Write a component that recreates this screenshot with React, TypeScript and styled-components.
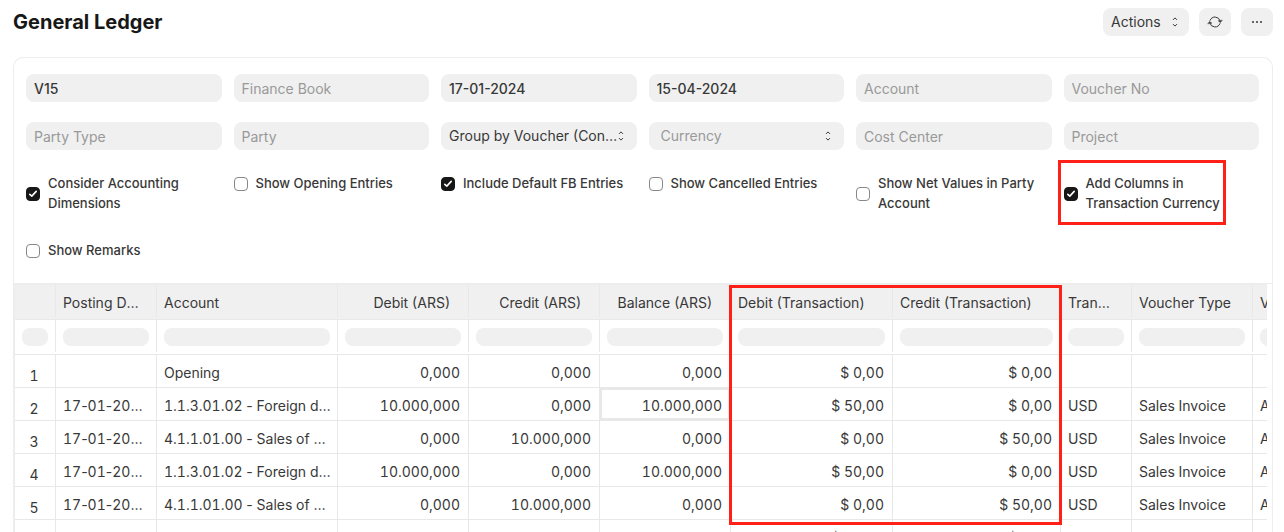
import React from "react";
import styled, { createGlobalStyle, css } from "styled-components";

const GlobalStyle = createGlobalStyle`
  *, *::before, *::after { box-sizing: border-box; }
  body {
    margin: 0;
    background: #ffffff;
    color: #383838;
    font-family: Inter, "Noto Sans", sans-serif;
    font-size: 14px;
    line-height: 20px;
    -webkit-font-smoothing: antialiased;
  }
`;

const Page = styled.div`
  display: flex;
  flex-direction: column;
  height: 100vh;
  overflow: hidden;
  padding: 8px 11px 0 13px;
`;

const PageHead = styled.header`
  display: flex;
  align-items: center;
  justify-content: space-between;
  height: 28px;
  margin-bottom: 21px;
`;

const Title = styled.h1`
  margin: 0;
  color: #171717;
  font-size: 20px;
  font-weight: 700;
  line-height: 28px;
`;

const HeadActions = styled.div`
  display: flex;
  gap: 10px;
`;

const HeadButton = styled.button<{ $wide?: boolean }>`
  display: flex;
  align-items: center;
  justify-content: ${(p) => (p.$wide ? "space-between" : "center")};
  width: ${(p) => (p.$wide ? "86px" : "32px")};
  height: 28px;
  padding: ${(p) => (p.$wide ? "0 10px 0 8px" : "0")};
  border: 0;
  border-radius: 8px;
  background: #f0f0f0;
  color: #383838;
  font: inherit;
`;

const Card = styled.main`
  flex: 1;
  min-height: 0;
  overflow: hidden;
  border: 1px solid #ededed;
  border-bottom: 0;
  border-radius: 10px 10px 0 0;
`;

const Filters = styled.form`
  display: grid;
  grid-template-columns: repeat(6, minmax(0, 1fr));
  gap: 20px 12px;
  padding: 16px 13px 19px 12px;
`;

const fieldBox = css`
  width: 100%;
  height: 28px;
  border: 0;
  border-radius: 8px;
  background: #f0f0f0;
  color: #383838;
  font: inherit;
  outline: none;
`;

const Field = styled.input`
  ${fieldBox}
  padding: 1px 8px 0;
  font-weight: 500;
  &::placeholder {
    color: #999999;
    font-weight: 400;
    opacity: 1;
  }
`;

const SelectWrap = styled.div`
  position: relative;
`;

const Select = styled.select<{ $empty?: boolean }>`
  ${fieldBox}
  appearance: none;
  padding: 0 12px 0 ${(p) => (p.$empty ? "12px" : "8px")};
  color: ${(p) => (p.$empty ? "#999999" : "#383838")};
  text-overflow: ellipsis;
`;

const SelectMark = styled.span`
  position: absolute;
  top: 0;
  right: 12px;
  display: flex;
  align-items: center;
  height: 28px;
  pointer-events: none;
`;

const Check = styled.label`
  position: relative;
  display: flex;
  align-items: center;
  align-self: start;
  gap: 8px;
  padding: 3px 0 2px;
  font-size: 13px;
  font-weight: 500;
`;

const CheckText = styled.span`
  padding-bottom: 2px;
`;

const Tick = styled.input`
  appearance: none;
  flex: none;
  width: 14px;
  height: 14px;
  margin: 0;
  border: 1px solid #888888;
  border-radius: 4px;
  background: #ffffff;
  &:checked {
    border-color: #171717;
    background: #171717 url("data:image/svg+xml,%3Csvg xmlns='http://www.w3.org/2000/svg' viewBox='0 0 12 12' fill='none' stroke='white' stroke-width='1.6' stroke-linecap='round' stroke-linejoin='round'%3E%3Cpath d='M2.8 6.3L4.8 8.1L9.2 3.4'/%3E%3C/svg%3E") center / 12px 12px no-repeat;
  }
`;

const Highlight = styled.span<{ $area: "check" | "columns" }>`
  position: absolute;
  pointer-events: none;
  border: 3px solid #ff2018;
  ${(p) =>
    p.$area === "check"
      ? css`
          top: -10px;
          left: -6px;
          width: 168px;
          height: 65px;
        `
      : css`
          top: 1px;
          left: 715px;
          width: 333px;
          height: 240px;
        `}
`;

const GridScroll = styled.div`
  position: relative;
  border-top: 1px solid #ededed;
`;

const GridClip = styled.div`
  overflow: hidden;
  margin-right: 5px;
`;

const Grid = styled.table`
  table-layout: fixed;
  width: 1360px;
  border-collapse: separate;
  border-spacing: 0;
  border-top: 1px solid #ededed;
  border-left: 1px solid #ededed;
`;

const HeadCell = styled.th<{ $filter?: boolean }>`
  height: 35px;
  padding: 0;
  border-bottom: 1px solid #e8e8e8;
  background: ${(p) => (p.$filter ? "#ffffff" : "#f0f0f0")};
  font-weight: 400;
  vertical-align: top;
`;

const HeadInner = styled.div<{ $right?: boolean }>`
  height: 32px;
  padding: 8px ${(p) => (p.$right ? "18px" : "15px")} 0 7px;
  border-right: 1px solid #e8e8e8;
  overflow: hidden;
  text-align: ${(p) => (p.$right ? "right" : "left")};
  text-overflow: ellipsis;
  white-space: nowrap;
`;

const FilterInner = styled.div`
  height: 32px;
  padding: 8px 7px 0;
  border-right: 1px solid #e8e8e8;
`;

const FilterInput = styled.input`
  display: block;
  width: 100%;
  height: 18px;
  padding: 0 8px;
  border: 0;
  border-radius: 8px;
  background: #f0f0f0;
  font: inherit;
`;

type CellKind = "index" | "date" | "text" | "number";

const cellPadding: Record<CellKind, string> = {
  index: "10px 2px 0 0",
  date: "3px 8px 0 7px",
  text: "3px 5px 0 7px",
  number: "3px 8px 0 7px",
};

const cellAlign: Record<CellKind, string> = {
  index: "center",
  date: "left",
  text: "left",
  number: "right",
};

const Cell = styled.td<{ $kind: CellKind; $active?: boolean }>`
  height: 33px;
  padding: ${(p) => cellPadding[p.$kind]};
  border-right: 1px solid #e8e8e8;
  border-bottom: 1px solid #e8e8e8;
  overflow: hidden;
  font-variant-numeric: tabular-nums;
  text-align: ${(p) => cellAlign[p.$kind]};
  text-overflow: ellipsis;
  white-space: nowrap;
  box-shadow: ${(p) => (p.$active ? "inset 0 0 0 2px #e8e8e8" : "none")};
`;

const Hyphen = styled.span`
  font-variant-numeric: proportional-nums;
`;

/* Digits line up in columns, while hyphens keep their ordinary narrow width. */
const CellText = ({ value }: { value: string }) => (
  <>
    {value.split("-").map((part, i) => (
      <React.Fragment key={i}>
        {i > 0 && <Hyphen>-</Hyphen>}
        {part}
      </React.Fragment>
    ))}
  </>
);

const SortMark = () => (
  <svg width="8" height="12" viewBox="0 0 8 12" fill="none" stroke="#383838" strokeLinecap="round" strokeLinejoin="round" aria-hidden="true">
    <path d="M2.3 3.6L4 1.9L5.7 3.6M2.3 8.4L4 10.1L5.7 8.4" />
  </svg>
);

const RefreshMark = () => (
  <svg width="16" height="16" viewBox="0 0 16 16" fill="none" stroke="#383838" strokeLinecap="round" strokeLinejoin="round" aria-hidden="true">
    <path d="M3 6.4A5.4 5.4 0 0 1 13.2 7M13 9.6A5.4 5.4 0 0 1 2.8 9" />
    <path d="M11.4 7L13.4 8.5L15.1 6.4Z M4.6 9L2.6 7.5L0.9 9.6Z" fill="#383838" strokeWidth="0.5" />
  </svg>
);

const DotsMark = () => (
  <svg width="16" height="16" viewBox="0 0 16 16" fill="#383838" aria-hidden="true">
    <circle cx="4" cy="8" r="1" />
    <circle cx="8" cy="8" r="1" />
    <circle cx="12" cy="8" r="1" />
  </svg>
);

type Column = { label: string; width: number; kind: CellKind; right?: boolean };

const columns: Column[] = [
  { label: "", width: 41, kind: "index" },
  { label: "Posting Date", width: 101, kind: "date" },
  { label: "Account", width: 181, kind: "text" },
  { label: "Debit (ARS)", width: 131, kind: "number", right: true },
  { label: "Credit (ARS)", width: 131, kind: "number", right: true },
  { label: "Balance (ARS)", width: 131, kind: "number", right: true },
  { label: "Debit (Transaction)", width: 162, kind: "number" },
  { label: "Credit (Transaction)", width: 168, kind: "number" },
  { label: "Transaction", width: 71, kind: "text" },
  { label: "Voucher Type", width: 121, kind: "text" },
  { label: "Voucher No", width: 121, kind: "text" },
];

const receivable = ["17-01-2024", "1.1.3.01.02 - Foreign debtors", "10.000,000", "0,000", "10.000,000", "$ 50,00", "$ 0,00", "USD", "Sales Invoice", "ACC-SINV"];
const income = ["17-01-2024", "4.1.1.01.00 - Sales of merchandise", "0,000", "10.000,000", "0,000", "$ 0,00", "$ 50,00", "USD", "Sales Invoice", "ACC-SINV"];

const rows: string[][] = [
  ["", "Opening", "0,000", "0,000", "0,000", "$ 0,00", "$ 0,00", "", "", ""],
  receivable,
  income,
  receivable,
  income,
  receivable,
];

const checks = [
  { label: "Consider Accounting Dimensions", on: true },
  { label: "Show Opening Entries" },
  { label: "Include Default FB Entries", on: true },
  { label: "Show Cancelled Entries" },
  { label: "Show Net Values in Party Account" },
  { label: "Add Columns in Transaction Currency", on: true, marked: true },
  { label: "Show Remarks" },
];

const TextFilter = ({ name, value }: { name: string; value?: string }) => (
  <Field type="text" aria-label={name} placeholder={name} defaultValue={value} />
);

const SelectFilter = ({ name, option, empty }: { name: string; option: string; empty?: boolean }) => (
  <SelectWrap>
    <Select aria-label={name} $empty={empty}>
      <option>{option}</option>
    </Select>
    <SelectMark>
      <SortMark />
    </SelectMark>
  </SelectWrap>
);

export default function App() {
  return (
    <>
      <GlobalStyle />
      <Page>
        <PageHead>
          <Title>General Ledger</Title>
          <HeadActions>
            <HeadButton type="button" $wide>
              Actions
              <SortMark />
            </HeadButton>
            <HeadButton type="button" aria-label="Refresh">
              <RefreshMark />
            </HeadButton>
            <HeadButton type="button" aria-label="Menu">
              <DotsMark />
            </HeadButton>
          </HeadActions>
        </PageHead>
        <Card>
          <Filters>
            <TextFilter name="Company" value="V15" />
            <TextFilter name="Finance Book" />
            <TextFilter name="From Date" value="17-01-2024" />
            <TextFilter name="To Date" value="15-04-2024" />
            <TextFilter name="Account" />
            <TextFilter name="Voucher No" />
            <TextFilter name="Party Type" />
            <TextFilter name="Party" />
            <SelectFilter name="Group by" option="Group by Voucher (Consolidated)" />
            <SelectFilter name="Currency" option="Currency" empty />
            <TextFilter name="Cost Center" />
            <TextFilter name="Project" />
            {checks.map((c) => (
              <Check key={c.label}>
                <Tick type="checkbox" defaultChecked={c.on} />
                <CheckText>{c.label}</CheckText>
                {c.marked && <Highlight $area="check" />}
              </Check>
            ))}
          </Filters>
          <GridScroll>
            <GridClip>
              <Grid>
                <colgroup>
                  {columns.map((c, i) => (
                    <col key={i} style={{ width: c.width }} />
                  ))}
                </colgroup>
                <thead>
                  <tr>
                    {columns.map((c, i) => (
                      <HeadCell key={i} scope="col">
                        <HeadInner $right={c.right}>{c.label}</HeadInner>
                      </HeadCell>
                    ))}
                  </tr>
                  <tr>
                    {columns.map((c, i) => (
                      <HeadCell key={i} as="td" $filter>
                        <FilterInner>
                          <FilterInput type="text" aria-label={`Filter ${c.label || "row"}`} />
                        </FilterInner>
                      </HeadCell>
                    ))}
                  </tr>
                </thead>
                <tbody>
                  {rows.map((row, r) => (
                    <tr key={r}>
                      {[String(r + 1), ...row].map((value, c) => (
                        <Cell key={c} $kind={columns[c].kind} $active={r === 1 && c === 5}>
                          <CellText value={value} />
                        </Cell>
                      ))}
                    </tr>
                  ))}
                </tbody>
              </Grid>
            </GridClip>
            <Highlight $area="columns" />
          </GridScroll>
        </Card>
      </Page>
    </>
  );
}
